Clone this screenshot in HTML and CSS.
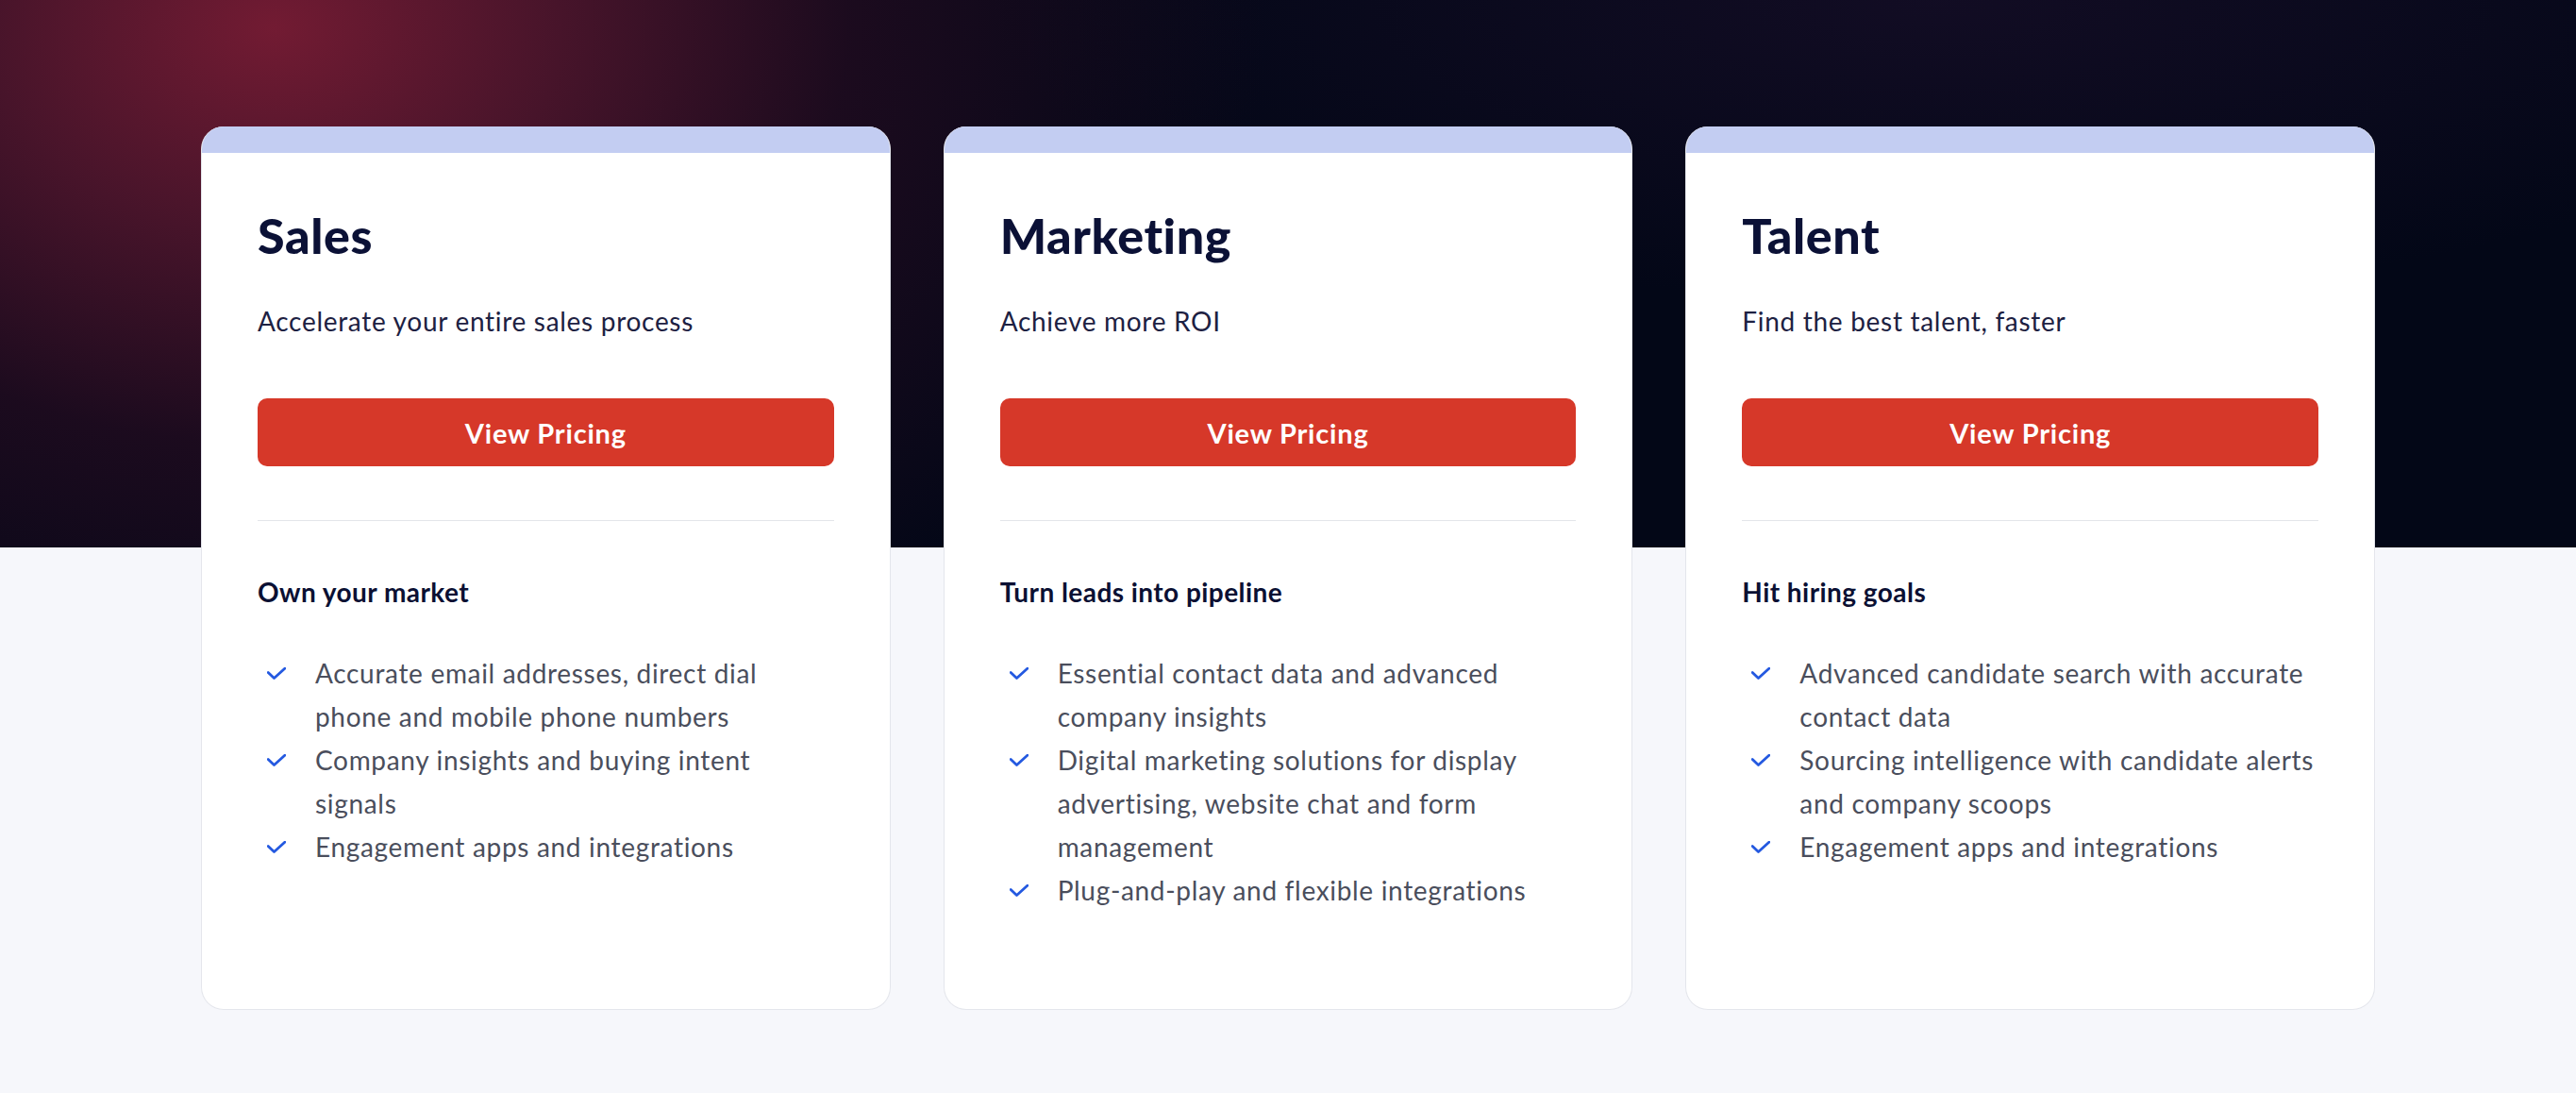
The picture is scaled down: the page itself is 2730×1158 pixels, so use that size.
FILE: index.html
```html
<!DOCTYPE html>
<html lang="en">
<head>
<meta charset="utf-8">
<title>Pricing</title>
<link rel="stylesheet" href="styles.css">
</head>
<body>
<section class="pricing">
  <div class="cards">
    <article class="card">
      <div class="card-band"></div>
      <div class="card-body">
        <h2 class="card-title">Sales</h2>
        <p class="card-sub">Accelerate your entire sales process</p>
        <a class="btn" href="#">View Pricing</a>
        <hr class="divider">
        <h3 class="card-heading">Own your market</h3>
        <ul class="features">
          <li><span class="check"><svg viewBox="0 0 20 13" width="20" height="13"><polyline points="1.2,5.5 7.5,11.5 18.8,1.2"/></svg></span><span>Accurate email addresses, direct dial phone and mobile phone numbers</span></li>
          <li><span class="check"><svg viewBox="0 0 20 13" width="20" height="13"><polyline points="1.2,5.5 7.5,11.5 18.8,1.2"/></svg></span><span>Company insights and buying intent signals</span></li>
          <li><span class="check"><svg viewBox="0 0 20 13" width="20" height="13"><polyline points="1.2,5.5 7.5,11.5 18.8,1.2"/></svg></span><span>Engagement apps and integrations</span></li>
        </ul>
      </div>
    </article>
    <article class="card">
      <div class="card-band"></div>
      <div class="card-body">
        <h2 class="card-title">Marketing</h2>
        <p class="card-sub">Achieve more ROI</p>
        <a class="btn" href="#">View Pricing</a>
        <hr class="divider">
        <h3 class="card-heading">Turn leads into pipeline</h3>
        <ul class="features">
          <li><span class="check"><svg viewBox="0 0 20 13" width="20" height="13"><polyline points="1.2,5.5 7.5,11.5 18.8,1.2"/></svg></span><span>Essential contact data and advanced company insights</span></li>
          <li><span class="check"><svg viewBox="0 0 20 13" width="20" height="13"><polyline points="1.2,5.5 7.5,11.5 18.8,1.2"/></svg></span><span>Digital marketing solutions for display advertising, website chat and form management</span></li>
          <li><span class="check"><svg viewBox="0 0 20 13" width="20" height="13"><polyline points="1.2,5.5 7.5,11.5 18.8,1.2"/></svg></span><span>Plug-and-play and flexible integrations</span></li>
        </ul>
      </div>
    </article>
    <article class="card">
      <div class="card-band"></div>
      <div class="card-body">
        <h2 class="card-title">Talent</h2>
        <p class="card-sub">Find the best talent, faster</p>
        <a class="btn" href="#">View Pricing</a>
        <hr class="divider">
        <h3 class="card-heading">Hit hiring goals</h3>
        <ul class="features">
          <li><span class="check"><svg viewBox="0 0 20 13" width="20" height="13"><polyline points="1.2,5.5 7.5,11.5 18.8,1.2"/></svg></span><span>Advanced candidate search with accurate contact data</span></li>
          <li><span class="check"><svg viewBox="0 0 20 13" width="20" height="13"><polyline points="1.2,5.5 7.5,11.5 18.8,1.2"/></svg></span><span>Sourcing intelligence with candidate alerts and company scoops</span></li>
          <li><span class="check"><svg viewBox="0 0 20 13" width="20" height="13"><polyline points="1.2,5.5 7.5,11.5 18.8,1.2"/></svg></span><span>Engagement apps and integrations</span></li>
        </ul>
      </div>
    </article>
  </div>
</section>
</body>
</html>
```

FILE: styles.css
```css
* { box-sizing: border-box; }

html, body {
  margin: 0;
  padding: 0;
}

body {
  background: #f6f7fb;
  font-family: "Lato", "Noto Sans", sans-serif;
  -webkit-font-smoothing: antialiased;
}

.pricing {
  min-height: 1158px;
  padding: 134px 0 88px;
  background:
    radial-gradient(ellipse 1050px 760px at 290px 30px, rgba(120, 28, 52, 0.95) 0%, rgba(92, 24, 48, 0.78) 28%, rgba(48, 14, 36, 0.55) 58%, rgba(3, 7, 22, 0) 100%) 0 0 / 100% 580px no-repeat,
    radial-gradient(ellipse 1000px 320px at 2050px 0px, rgba(28, 16, 44, 0.6) 0%, rgba(3, 7, 22, 0) 100%) 0 0 / 100% 580px no-repeat,
    linear-gradient(#030717, #030717) 0 0 / 100% 580px no-repeat,
    #f6f7fb;
}

.cards {
  width: 2304px;
  margin: 0 auto;
  display: grid;
  grid-template-columns: repeat(3, 1fr);
  gap: 56px;
  align-items: stretch;
}

.card {
  background: #ffffff;
  border-radius: 24px;
  overflow: hidden;
  border: 1px solid #e4e6ec;
  border-top: 0;
  height: 936px;
  display: flex;
  flex-direction: column;
}

.card-band {
  height: 28px;
  background: #c3cdf2;
  margin: 0 -1px;
}

.card-body {
  padding: 56px 59px 0 59px;
}

.card-title {
  margin: 0;
  font-size: 52px;
  line-height: 62px;
  font-weight: 900;
  color: #0b1136;
  letter-spacing: 0.6px;
}

.card-sub {
  margin: 40px 0 0;
  font-size: 28px;
  line-height: 40px;
  font-weight: 400;
  color: #1d2142;
  letter-spacing: 0.7px;
}

.btn {
  display: flex;
  align-items: center;
  justify-content: center;
  margin-top: 62px;
  height: 72px;
  border-radius: 10px;
  background: #d63829;
  color: #ffffff;
  font-size: 29px;
  font-weight: 700;
  letter-spacing: 0.8px;
  text-decoration: none;
}

.divider {
  margin: 57px 0 0;
  border: 0;
  height: 1px;
  background: #e3e5ea;
}

.card-heading {
  margin: 55px 0 0;
  font-size: 28px;
  line-height: 40px;
  font-weight: 700;
  color: #0b1033;
  letter-spacing: 0.45px;
}

.features {
  list-style: none;
  margin: 43px 0 0;
  padding: 0;
}

.features li {
  display: flex;
  align-items: flex-start;
  font-size: 28px;
  line-height: 46px;
  color: #4a4e5c;
  letter-spacing: 0.68px;
}

.check {
  flex: 0 0 auto;
  width: 61px;
  height: 46px;
  display: flex;
  align-items: center;
  padding-left: 10px;
}

.check svg {
  display: block;
  fill: none;
  stroke: #2459e0;
  stroke-width: 2.8;
  stroke-linecap: round;
  stroke-linejoin: round;
}
```
